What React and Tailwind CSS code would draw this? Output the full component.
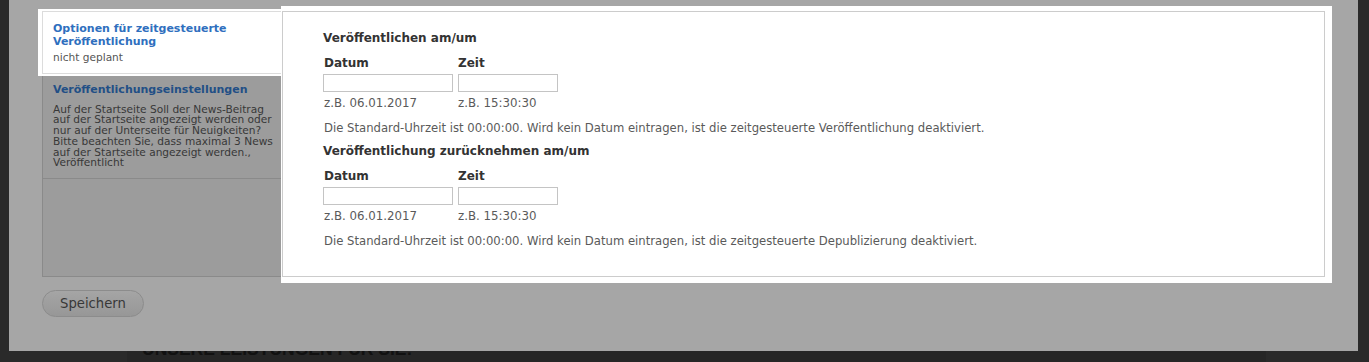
export default function App() {
  const Section = ({ title, note, first }) => (
    <div className={first ? "" : "mt-[8px]"}>
      <div className="text-[12px] leading-[16px] font-bold text-[#333]">{title}</div>
      <div className="mt-[9px] flex">
        <div className="w-[130px] mr-[5px] flex flex-col">
          <div className="pl-[1px] text-[12px] leading-[16px] font-bold text-[#333]">Datum</div>
          <div className="mt-[3px] h-[18px] w-[130px] border border-[#c4c4c4] bg-white" />
          <div className="mt-[3px] pl-[1px] text-[11.8px] leading-[16px] text-[#5a5a5a] whitespace-nowrap">z.B. 06.01.2017</div>
        </div>
        <div className="w-[100px] flex flex-col">
          <div className="text-[12px] leading-[16px] font-bold text-[#333]">Zeit</div>
          <div className="mt-[3px] h-[18px] w-[100px] border border-[#c4c4c4] bg-white" />
          <div className="mt-[3px] text-[11.8px] leading-[16px] text-[#5a5a5a] whitespace-nowrap">z.B. 15:30:30</div>
        </div>
      </div>
      <div className="mt-[10px] pl-[1px] text-[11.65px] leading-[14px] text-[#5a5a5a] whitespace-nowrap">
        Die Standard-Uhrzeit ist 00:00:00. Wird kein Datum eintragen, ist die zeitgesteuerte {note} deaktiviert.
      </div>
    </div>
  );

  return (
    <div className="w-[1369px] h-[362px] overflow-hidden bg-[#2a2a2a] flex flex-col font-['DejaVu_Sans',sans-serif]">
      <div className="flex h-[351px] shrink-0">
        <div className="w-[9px] shrink-0" />
        <div className="w-[1349px] shrink-0 bg-[#a6a6a6] flex flex-col">
          <div className="flex items-start">
            <div className="ml-[33px] mt-[11px] w-[240px] h-[266px] shrink-0 border border-[#8a8a8a] bg-[#9c9c9c] flex flex-col">
              <div className="-ml-[5px] -mt-[3px] w-[243px] h-[67px] shrink-0 bg-white pl-[4px] py-[2px]">
                <div className="h-[63px] border-l border-t border-b border-[#dcdcdc] pl-[10px] pt-[11px]">
                  <div className="text-[11px] leading-[12.5px] font-bold text-[#2f6fbe] whitespace-nowrap">
                    Optionen für zeitgesteuerte
                    <br />
                    Veröffentlichung
                  </div>
                  <div className="mt-[2px] text-[10.6px] leading-[14px] text-[#555]">nicht geplant</div>
                </div>
              </div>
              <div className="h-[103px] shrink-0 border-b border-[#8a8a8a] pl-[10px] pt-[8px]">
                <div className="text-[11px] leading-[12.5px] font-bold text-[#224f86] whitespace-nowrap">Veröffentlichungseinstellungen</div>
                <div className="mt-[7px] text-[10.6px] leading-[10.8px] text-[#383838] whitespace-nowrap">
                  Auf der Startseite Soll der News-Beitrag
                  <br />
                  auf der Startseite angezeigt werden oder
                  <br />
                  nur auf der Unterseite für Neuigkeiten?
                  <br />
                  Bitte beachten Sie, dass maximal 3 News
                  <br />
                  auf der Startseite angezeigt werden.,
                  <br />
                  Veröffentlicht
                </div>
              </div>
            </div>
            <div className="-ml-[1px] mt-[6px] shrink-0 bg-white pt-[5px] pb-[6px] pl-[1px] pr-[7px]">
              <div className="w-[1043px] h-[266px] border border-[#cccccc] pl-[40px] pt-[18px]">
                <Section first title="Veröffentlichen am/um" note="Veröffentlichung" />
                <Section title="Veröffentlichung zurücknehmen am/um" note="Depublizierung" />
              </div>
            </div>
          </div>
          <div className="ml-[33px] mt-[7px]">
            <div className="w-[102px] h-[27px] rounded-full border border-[#8c8c8c] bg-gradient-to-b from-[#a5a5a5] to-[#979797] flex items-center justify-center text-[13.2px] text-[#383838]">
              Speichern
            </div>
          </div>
        </div>
        <div className="flex-1" />
      </div>
      <div className="flex h-[11px] shrink-0">
        <div className="w-[127px] shrink-0 bg-[#2a2a2a]" />
        <div className="flex-1 bg-[#262626] overflow-hidden pl-[15px]">
          <div className="-mt-[11px] text-[17.5px] leading-[18px] font-bold text-[#111] whitespace-nowrap font-['Liberation_Sans',sans-serif]">
            UNSERE LEISTUNGEN FÜR SIE!
          </div>
        </div>
        <div className="w-[103px] shrink-0 bg-[#2a2a2a]" />
      </div>
    </div>
  );
}
